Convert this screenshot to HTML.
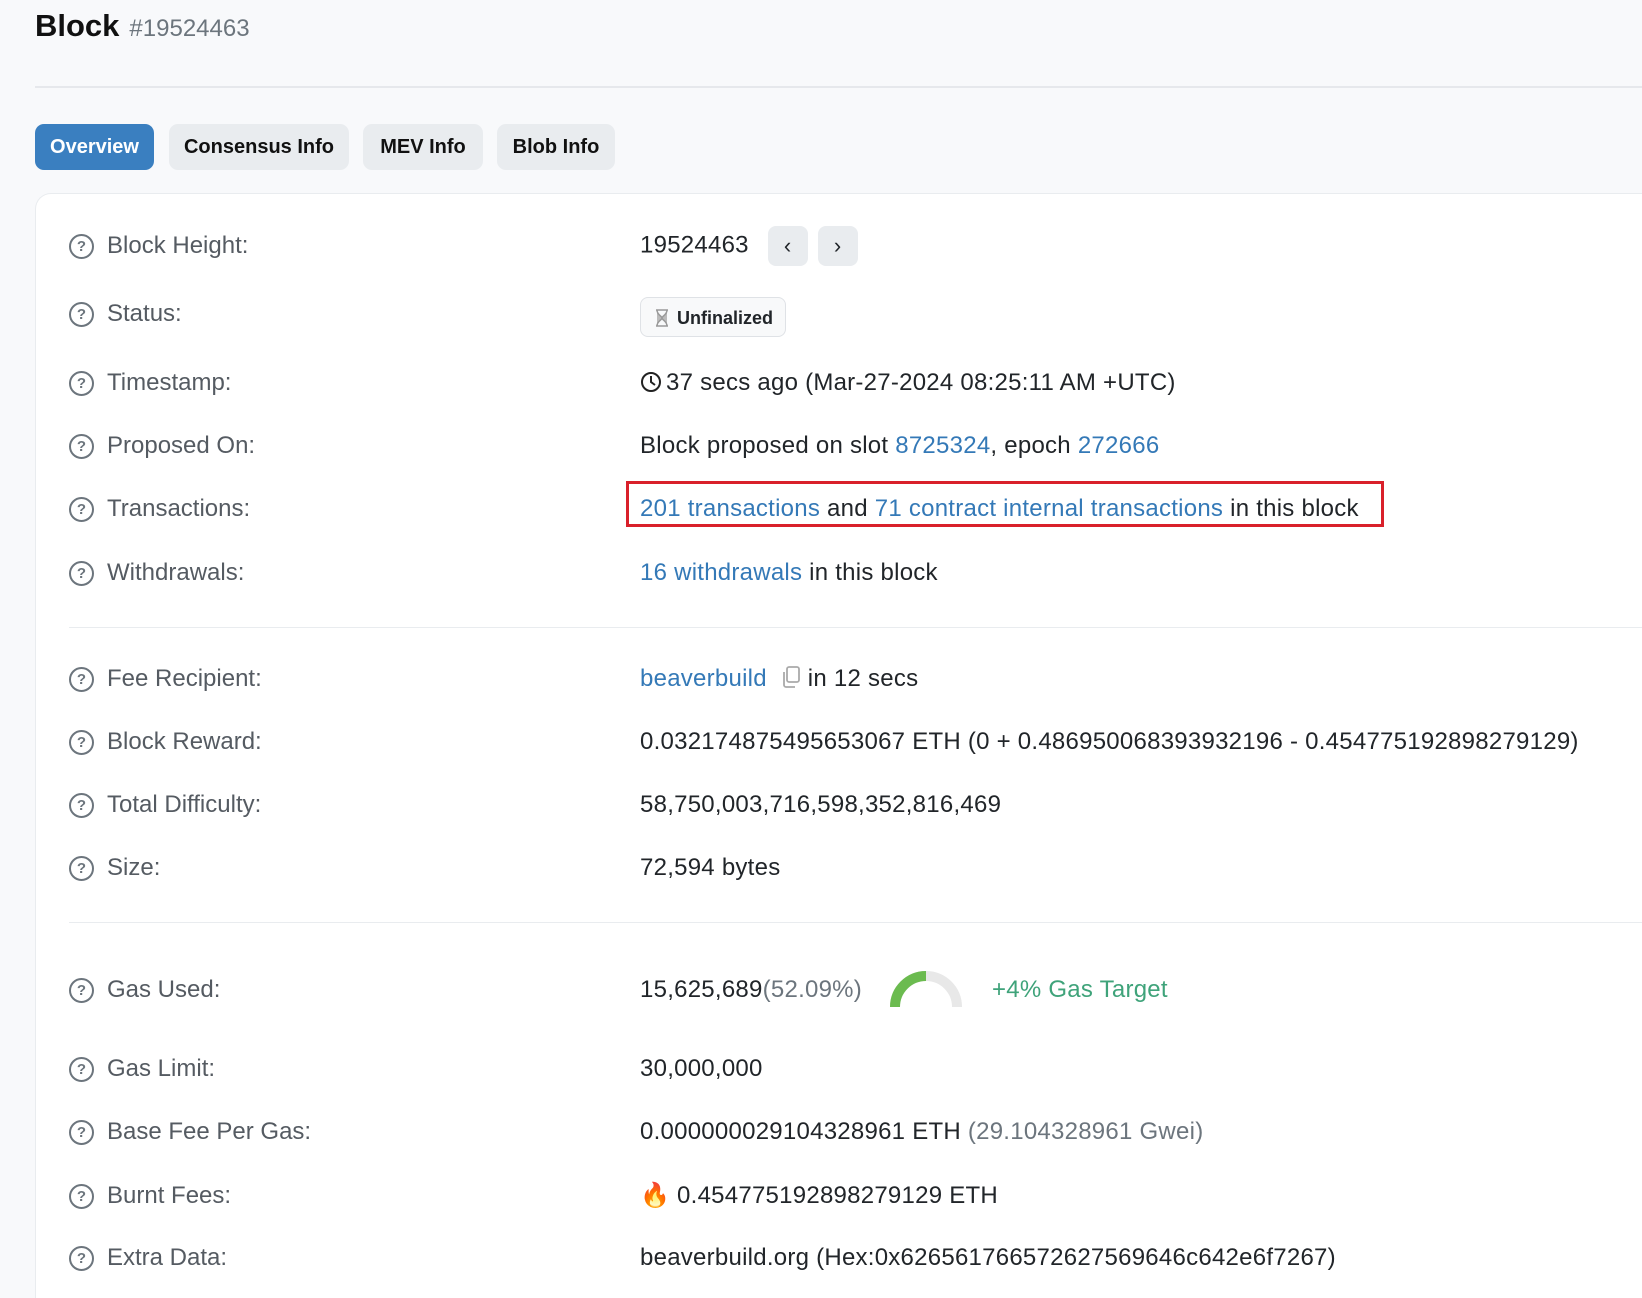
<!DOCTYPE html>
<html style="overflow:hidden"><head><meta charset="utf-8"><style>
html,body{height:1298px}
body{margin:0;width:1642px;overflow:hidden;background:#f8f9fb;font-family:"Liberation Sans",Arial,sans-serif;color:#212529;position:relative}
.abs{position:absolute;white-space:nowrap}
.title{left:35px;top:8px;font-size:31px;font-weight:bold;color:#111}
.title span{font-size:24px;font-weight:normal;color:#6c757d;margin-left:10px}
.hr0{position:absolute;left:35px;right:0;top:86px;height:2px;background:#e6e8ec}
.tab{position:absolute;top:124px;height:46px;border-radius:9px;background:#e9ecef;font-size:20px;font-weight:bold;color:#111;line-height:46px;text-align:center}
.card{position:absolute;left:35px;top:193px;right:0;height:1105px;background:#fff;border:1px solid #e9ecef;border-bottom:none;border-right:none;border-radius:16px 0 0 0}
.lab{position:absolute;left:69px;font-size:24px;color:#555b62;line-height:30px}
.lab i{display:inline-block;width:21px;height:21px;border:2px solid #6c757d;border-radius:50%;font-style:normal;font-size:15px;line-height:21px;text-align:center;color:#6c757d;margin-right:13px;vertical-align:2px;font-weight:bold}
.val{position:absolute;left:640px;font-size:24px;line-height:30px;color:#212529;letter-spacing:0.25px;white-space:nowrap}
a{color:#3479b7;text-decoration:none}
.g{color:#6c757d}
.sep{position:absolute;left:69px;right:0;height:1px;background:#e9ecef}
.nb{display:inline-block;width:40px;height:40px;background:#e9ecef;border-radius:8px;vertical-align:middle;text-align:center;line-height:40px;font-size:22px;margin-left:10px}
</style></head><body>
<div class="abs title">Block<span>#19524463</span></div>
<div class="hr0"></div>
<div class="tab" style="left:35px;width:119px;background:#3a7fc0;color:#fff">Overview</div>
<div class="tab" style="left:169px;width:180px">Consensus Info</div>
<div class="tab" style="left:363px;width:120px">MEV Info</div>
<div class="tab" style="left:497px;width:118px">Blob Info</div>
<div class="card"></div>

<div class="lab" style="top:231px"><i>?</i>Block Height:</div>
<div class="val" style="top:226px">19524463 <span class="nb" style="margin-left:12px">‹</span><span class="nb">›</span></div>
<div class="lab" style="top:299px"><i>?</i>Status:</div>
<div class="abs" style="left:640px;top:297px;width:146px;height:40px;border:1px solid #dfe2e6;border-radius:8px;background:#f8f9fa;font-size:18px;font-weight:bold;line-height:40px;box-sizing:border-box;padding-left:36px">Unfinalized<svg style="position:absolute;left:14px;top:11px" width="14" height="18" viewBox="0 0 14 18"><path d="M1 1h12M1 17h12M2 1c0 5 5 6 5 8s-5 3-5 8M12 1c0 5-5 6-5 8s5 3 5 8" fill="#bbb" stroke="#999" stroke-width="1.5"/></svg></div>
<div class="lab" style="top:368px"><i>?</i>Timestamp:</div>
<div class="val" style="top:368px"><svg width="22" height="22" viewBox="0 0 22 22" style="vertical-align:-3px;margin-right:4px"><circle cx="11" cy="11" r="9" fill="none" stroke="#222" stroke-width="2"/><path d="M11 5v6l4 3" fill="none" stroke="#222" stroke-width="2"/></svg>37 secs ago (Mar-27-2024 08:25:11 AM +UTC)</div>
<div class="lab" style="top:431px"><i>?</i>Proposed On:</div>
<div class="val" style="top:431px">Block proposed on slot <a>8725324</a>, epoch <a>272666</a></div>
<div class="lab" style="top:494px"><i>?</i>Transactions:</div>
<div class="val" style="top:494px"><a>201 transactions</a> and <a>71 contract internal transactions</a> in this block</div>
<div class="abs" style="left:626px;top:481px;width:758px;height:46px;border:3px solid #d9202a;box-sizing:border-box"></div>
<div class="lab" style="top:558px"><i>?</i>Withdrawals:</div>
<div class="val" style="top:558px"><a>16 withdrawals</a> in this block</div>
<div class="sep" style="top:627px"></div>
<div class="lab" style="top:664px"><i>?</i>Fee Recipient:</div>
<div class="val" style="top:664px"><a>beaverbuild</a> <svg width="22" height="24" viewBox="0 0 22 24" style="vertical-align:-3px;margin:0 6px"><rect x="7" y="2" width="12" height="15" rx="2" fill="none" stroke="#aaa" stroke-width="1.8"/><path d="M4 7v13a2 2 0 0 0 2 2h9" fill="none" stroke="#aaa" stroke-width="1.8"/></svg>in 12 secs</div>
<div class="lab" style="top:727px"><i>?</i>Block Reward:</div>
<div class="val" style="top:727px">0.032174875495653067 ETH (0 + 0.486950068393932196 - 0.454775192898279129)</div>
<div class="lab" style="top:790px"><i>?</i>Total Difficulty:</div>
<div class="val" style="top:790px">58,750,003,716,598,352,816,469</div>
<div class="lab" style="top:853px"><i>?</i>Size:</div>
<div class="val" style="top:853px">72,594 bytes</div>
<div class="sep" style="top:922px"></div>
<div class="lab" style="top:975px"><i>?</i>Gas Used:</div>
<div class="val" style="top:975px">15,625,689<span class="g">(52.09%)</span></div>
<svg class="abs" style="left:890px;top:970px" width="72" height="38" viewBox="0 0 72 38"><path d="M5 37 A31 31 0 0 1 67 37" fill="none" stroke="#e8e8e8" stroke-width="10"/><path d="M5 37 A31 31 0 0 1 36 6" fill="none" stroke="#6bbb4f" stroke-width="10"/></svg>
<div class="val" style="left:992px;top:975px;color:#3fa37a">+4% Gas Target</div>
<div class="lab" style="top:1054px"><i>?</i>Gas Limit:</div>
<div class="val" style="top:1054px">30,000,000</div>
<div class="lab" style="top:1117px"><i>?</i>Base Fee Per Gas:</div>
<div class="val" style="top:1117px">0.000000029104328961 ETH <span class="g">(29.104328961 Gwei)</span></div>
<div class="lab" style="top:1181px"><i>?</i>Burnt Fees:</div>
<div class="val" style="top:1181px">🔥 0.454775192898279129 ETH</div>
<div class="lab" style="top:1243px"><i>?</i>Extra Data:</div>
<div class="val" style="top:1243px">beaverbuild.org (Hex:0x626561766572627569646c642e6f7267)</div>
</body></html>
